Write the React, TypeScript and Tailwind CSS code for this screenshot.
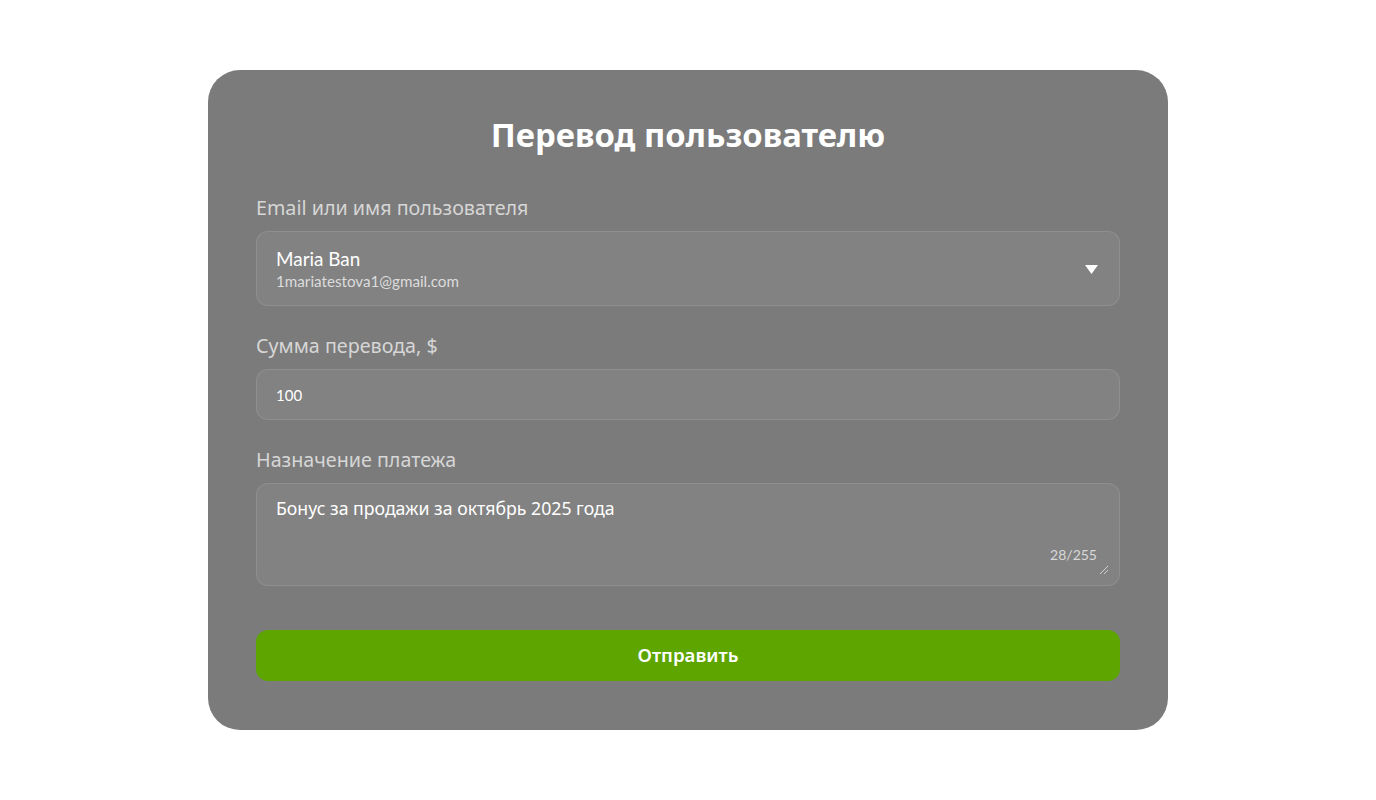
import React from "react";

export default function App() {
  return (
    <div className="min-h-[800px] w-full bg-white flex justify-center pt-[70px]" style={{ fontFamily: '"Noto Sans", "Open Sans", sans-serif' }}>
      <div className="w-[960px] h-[660px] rounded-[32px] bg-[#7b7b7b] px-12 pt-12 pb-12 flex flex-col">
        <h1 className="text-[32.8px] leading-[34px] mb-[2px] font-bold text-white text-center">Перевод пользователю</h1>

        <label className="mt-[42px] text-[19.7px] leading-[24px] text-[#d6d6d6]">Email или имя пользователя</label>
        <div className="mt-[11px] h-[75px] rounded-[12px] border border-white/10 bg-[#828282] pl-[19px] pr-5 flex items-center justify-between">
          <div className="flex flex-col">
            <span className="text-[18.9px] leading-[24px] text-white" style={{ fontFamily: 'Lato, "Noto Sans", sans-serif' }}>Maria Ban</span>
            <span className="text-[15.2px] leading-[20px] text-[#dcdcdc]" style={{ fontFamily: 'Lato, "Noto Sans", sans-serif' }}>1mariatestova1@gmail.com</span>
          </div>
          <svg width="13" height="10" viewBox="0 0 13 10" className="mr-[1px] mt-[2px]">
            <polygon points="0,0 13,0 6.5,9" fill="white" />
          </svg>
        </div>

        <label className="mt-[28px] text-[19.7px] leading-[24px] text-[#d6d6d6]">Сумма перевода, $</label>
        <div className="mt-[11px] h-[51px] rounded-[12px] border border-white/10 bg-[#828282] pl-[19px] flex items-center">
          <span className="text-[15px] text-white pt-[2px]" style={{ fontFamily: 'Lato, "Noto Sans", sans-serif' }}>100</span>
        </div>

        <label className="mt-[28px] text-[19.7px] leading-[24px] text-[#d6d6d6]">Назначение платежа</label>
        <div className="relative mt-[11px] h-[103px] rounded-[12px] border border-white/10 bg-[#828282] pl-[19px] pt-[12px]">
          <span className="text-[17.7px] leading-[24px] text-white">Бонус за продажи за октябрь 2025 года</span>
          <span className="absolute right-[22px] bottom-[21px] text-[14px] leading-[18px] text-[#d8d8d8]" style={{ fontFamily: 'Lato, "Noto Sans", sans-serif' }}>28/255</span>
          <svg width="10" height="10" viewBox="0 0 10 10" className="absolute right-[10px] bottom-[10px]">
            <line x1="1" y1="9" x2="9" y2="1" stroke="#d0d0d0" strokeWidth="1" />
            <line x1="5" y1="9" x2="9" y2="5" stroke="#d0d0d0" strokeWidth="1" />
          </svg>
        </div>

        <button className="mt-[44px] h-[51px] rounded-[12px] bg-[#5ea500] text-white text-[18.7px] font-semibold">Отправить</button>
      </div>
    </div>
  );
}
